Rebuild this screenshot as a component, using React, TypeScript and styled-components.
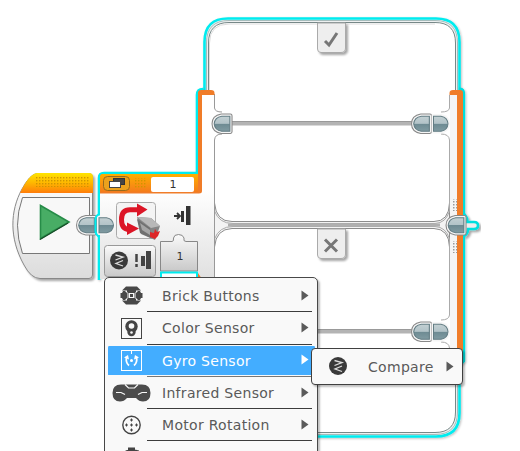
import React from "react";
import styled, { createGlobalStyle } from "styled-components";

const GlobalStyle = createGlobalStyle`
  body { margin: 0; background: #fff; overflow: hidden; }
`;

const Canvas = styled.main`
  position: relative;
  width: 520px;
  height: 451px;
  overflow: hidden;
  background: #fff;
  font-family: "DejaVu Sans", sans-serif;
`;

const BlockArt = styled.svg`
  position: absolute;
  inset: 0;
  display: block;
`;

const BlockValue = styled.span<{ $x: number; $y: number }>`
  position: absolute;
  left: ${(p) => p.$x}px;
  top: ${(p) => p.$y}px;
  width: 20px;
  text-align: center;
  font: 11px/14px "DejaVu Sans", sans-serif;
  color: #333;
`;

const Menu = styled.ul`
  position: absolute;
  left: 104px;
  top: 277px;
  box-sizing: border-box;
  width: 214px;
  height: 210px;
  margin: 0;
  padding: 2px 3px;
  list-style: none;
  background: #f9f9f9;
  border: 1px solid #484848;
  border-radius: 5px;
  box-shadow: 2px 2px 2px rgba(0, 0, 0, 0.25);
`;

const MenuRow = styled.li<{ $active?: boolean }>`
  display: grid;
  grid-template-columns: 39px 1fr;
  height: 32.3px;
  margin-right: ${(p) => (p.$active ? -1 : 0)}px;
  border-radius: 3px;
  color: ${(p) => (p.$active ? "#fff" : "#5a5a5a")};
  background: ${(p) => (p.$active ? "linear-gradient(#43adff, #43adff) 0 1px / 100% 29px no-repeat" : "none")};
`;

const IconCell = styled.span`
  display: flex;
  align-items: center;
  padding: 0 0 1px 4px;
`;

const LabelCell = styled.span<{ $active?: boolean }>`
  display: flex;
  align-items: center;
  justify-content: space-between;
  box-sizing: border-box;
  margin-right: ${(p) => (p.$active ? 3 : 2)}px;
  padding: 0 3px 1px 15px;
  border-bottom: 1px solid ${(p) => (p.$active ? "#777" : "#3c3c3c")};
`;

const Label = styled.span`
  padding-top: 2px;
  font-size: 14px;
  letter-spacing: 0.3px;
  line-height: 20px;
  white-space: nowrap;
`;

const Submenu = styled.div`
  position: absolute;
  left: 311px;
  top: 348px;
  box-sizing: border-box;
  display: flex;
  align-items: center;
  width: 152px;
  height: 37px;
  padding: 0 8px 1px 17px;
  color: #5a5a5a;
  background: #f9f9f9;
  border: 1px solid #404040;
  border-radius: 4px;
  box-shadow: 2px 2px 2px rgba(0, 0, 0, 0.25);
`;

const SubmenuLabel = styled(Label)`
  margin: 0 auto 0 20px;
`;

const Arrow = () => (
  <svg width="8" height="11" viewBox="0 0 8 11"><path d="M.5.5 7.5 5.5.5 10.5Z" fill="currentColor" /></svg>
);

const CompareGlyph = ({ x = 0, y = 0 }: { x?: number; y?: number }) => (
  <g transform={`translate(${x} ${y})`}>
    <circle cx="9" cy="9" r="9" fill="#3a3a3a" />
    <path d="M5.500 3.500 13 5.500 5.500 8.500M13 9 6 12 13 14.500" fill="none" stroke="#ddd" strokeWidth="1.300" />
  </g>
);

const icons: Record<string, React.ReactNode> = {
  brick: (
    <g fill="#484848">
      <path d="M14 5.500H25L29 9.500H10ZM10 19.500H29L25 23.500H14Z" />
      <path d="M8.500 12H10L11 10H13L15 12V17L13 19H11L10 17H8.500ZM30.500 12H29L28 10H26L24 12V17L26 19H28L29 17H30.500Z" />
      <path d="M15 8H24V11H15ZM15 18H24V21H15Z" />
      <rect x="16" y="11.500" width="7" height="6" fill="#f9f9f9" stroke="#484848" />
      <rect x="18" y="13" width="3" height="3" />
    </g>
  ),
  color: (
    <g>
      <rect x="9.5" y="5.5" width="20" height="20" fill="none" stroke="#444" />
      <circle cx="19.5" cy="13.5" r="6.200" fill="#444" /><circle cx="19.5" cy="19" r="4.200" fill="#444" />
      <circle cx="19.5" cy="13" r="2.8" fill="#f9f9f9" /><circle cx="19.5" cy="19.500" r="1.3" fill="#f9f9f9" />
    </g>
  ),
  gyro: (
    <g fill="none" stroke="#fff">
      <rect x="9.5" y="5.5" width="20" height="20" />
      <path d="M19.5 6V9" />
      <path d="M17 20.500Q13.500 18 14.500 12M22 20.500Q25.500 18 24.500 12" strokeWidth="1.800" />
      <path d="M12 12.500 16 10 17 14.500ZM27 12.500 23 10 22 14.500Z" fill="#fff" stroke="none" />
      <circle cx="19.5" cy="15.500" r="1.5" fill="#fff" stroke="none" />
    </g>
  ),
  infrared: (
    <g>
      <path d="M9 6.500H30Q38.500 6.500 38.500 15T31 23.500Q27 23.500 24 20H15Q12 23.500 8 23.500Q.5 23.500 .5 15T9 6.500Z" fill="#4c4c4c" />
      <path d="M13 6.500 16.500 10H22.500L26 6.500" fill="none" stroke="#f9f9f9" strokeWidth="1.200" />
      <path d="M4 14.500H9L13 16.500M26 16.500 30 14.500H35" fill="none" stroke="#f9f9f9" strokeWidth="1.2" />
    </g>
  ),
  motor: (
    <g fill="none" stroke="#444">
      <circle cx="19.5" cy="15" r="8.700" strokeWidth="1.4" />
      <path d="M19.5 8.500V11.500M19.5 18.500V21.500M18 10H21M18 20H21M13 15H16M14.500 13.500V16.500M23 15H26M24.500 13.500V16.500M18 15H21M19.500 13.500V16.500" />
    </g>
  ),
  timer: (
    <g fill="#444"><path d="M16 5.500H23V8H16ZM13.500 8.500 17 7.500H23L27 8.500V11H13.500Z" /><circle cx="19.500" cy="17" r="8" /></g>
  ),
};

const entries = [
  ["brick", "Brick Buttons"],
  ["color", "Color Sensor"],
  ["gyro", "Gyro Sensor"],
  ["infrared", "Infrared Sensor"],
  ["motor", "Motor Rotation"],
  ["timer", ""],
];

const Plug = ({ x, y, flip }: { x: number; y: number; flip?: boolean }) => (
  <g transform={flip ? `translate(${x + 19} ${y}) scale(-1 1.08)` : `translate(${x} ${y}) scale(1.08)`}>
    <path d="M9 .5H17.5Q19 .5 19 2V17Q19 18.5 17.5 18.5H9Q.5 17 .5 9.5Q.5 2 9 .5Z" fill="#f6f6f6" stroke={flip ? "none" : "#888"} />
    <path d="M9.5 2.5H17V16.5H9.5Q3 15.5 2.5 9.5Q3 3.5 9.5 2.5Z" fill="url(#plug)" stroke="#637d84" />
  </g>
);

const Blocks = () => (
  <BlockArt width="520" height="451" viewBox="0 0 520 451">
    <defs>
      <linearGradient id="amber" x2="0" y2="1"><stop stopColor="#ffe500" /><stop offset=".5" stopColor="#ffb600" /><stop offset="1" stopColor="#ff7d0a" /></linearGradient>
      <linearGradient id="orange" x2="0" y2="1"><stop stopColor="#ffb000" /><stop offset="1" stopColor="#f47b1c" /></linearGradient>
      <linearGradient id="plug" x2="0" y2="1"><stop stopColor="#c3d0d3" /><stop offset=".48" stopColor="#b2c3c8" /><stop offset=".5" stopColor="#6d8a92" /><stop offset="1" stopColor="#809ba2" /></linearGradient>
      <linearGradient id="body" x2="0" y2="1"><stop stopColor="#fff" /><stop offset="1" stopColor="#dcdcdc" /></linearGradient>
      <linearGradient id="switchBody" gradientUnits="userSpaceOnUse" x1="0" x2="0" y1="190" y2="285"><stop stopColor="#fff" /><stop offset="1" stopColor="#dedede" /></linearGradient>
      <linearGradient id="chip" x2="0" y2="1"><stop stopColor="#fafafa" /><stop offset="1" stopColor="#c9c9c9" /></linearGradient>
      <pattern id="dots" width="3" height="3" patternUnits="userSpaceOnUse"><rect width="1.4" height="1.4" fill="#d09400" /></pattern>
      <pattern id="greyDots" width="3" height="3" patternUnits="userSpaceOnUse"><rect width="1.5" height="1.5" fill="#999" /></pattern>
      <filter id="shadow" x="-10%" y="-10%" width="125%" height="125%"><feDropShadow dx="2" dy="2" stdDeviation="1.2" floodOpacity=".35" /></filter>
      <filter id="softShadow" filterUnits="userSpaceOnUse" x="0" y="0" width="520" height="451"><feDropShadow dx="1" dy="1" stdDeviation="1.2" floodOpacity=".25" /></filter>
    </defs>

    {/* start block */}
    <path d="M37 173.5H89Q92.5 173.5 92.5 177V275Q92.5 278.5 89 278.5H40Q31 278.5 24 265C9 238 10 211 22 189Q30 174 37 173.5Z" fill="url(#body)" stroke="#888" filter="url(#shadow)" />
    <path d="M20 193Q29 174 37 173H89Q93 173 93 177V193Z" fill="url(#amber)" />
    <rect x="36" y="177" width="53" height="10" fill="url(#dots)" />
    <path d="M22.5 197.5H89.5V253.5H22.5Q12.5 225 22.5 197.5Z" fill="#f8f8f8" stroke="#777" />
    <path d="M40.5 205.5 69 222 40.5 238.5Z" fill="#48ad65" stroke="#278c48" strokeWidth="1.6" />
    <path d="M40 239.5 68 223" stroke="#174d28" strokeWidth="1.2" />

    {/* switch frame */}
    <path d="M204.5 95V42Q204.5 18.5 228 18.5H436Q459.5 18.5 459.5 42V413Q459.5 436.5 436 436.5H225Q204.5 436.5 204.5 413Z" fill="#eef1f1" stroke="#00ecef" strokeWidth="2.600" filter="url(#softShadow)" />
    <path d="M206.500 215V43Q206.500 20.500 229 20.500H435Q457.500 20.500 457.500 43V412Q457.500 434.500 435 434.500H229" fill="none" stroke="#a5bcbc" />
    <path d="M208.5 215V43Q208.5 22.5 229 22.5H435Q455.5 22.5 455.5 43V412Q455.5 432.5 435 432.5H229Q208.5 432.5 208.5 412Z" fill="#fff" stroke="#778888" />
    <path d="M209.5 95V43Q209.5 24 229 24H435" fill="none" stroke="#ddd" />

    {/* seam between the two cases */}
    <path d="M214.5 203Q216 221.500 232 221.5H434Q449 221.500 449.5 203V247Q449 229 434 228.5H232Q216 229 214.5 247Z" fill="#f3f3f3" stroke="#8c8c8c" />
    <path d="M214.500 211Q219 223.500 233 223.500H435Q446 223 449.500 211M214.500 239Q219 226.500 233 226.500H435Q446 227 449.500 239" fill="none" stroke="#aaa" />
    <path d="M228 225H440" stroke="#b0b0b0" strokeWidth="3" />

    {/* sequence wires */}
    <path d="M230 123.5H414M230 331.5H414" stroke="#b4b4b4" strokeWidth="4" />
    <path d="M230 121.5H414M230 329.5H414" stroke="#999" />

    {/* case tabs */}
    <g fill="#eee" stroke="#aaa" filter="url(#shadow)">
      <path d="M317.5 23V49Q317.5 52.5 321 52.5H341Q345.5 52.5 345.5 48V23Z" />
      <path d="M317.5 229V255Q317.5 258.5 321 258.5H341Q345.5 258.5 345.5 254V229Z" />
    </g>
    <path d="M325 41 329 45 337 33" fill="none" stroke="#777" strokeWidth="3" />
    <path d="M325 239.5 337 251.5M337 239.5 325 251.5" stroke="#777" strokeWidth="3" />

    {/* right column */}
    <path d="M459 89H460Q463.700 89 463.700 94V361L460 365" fill="none" stroke="#00dede" strokeWidth="3" filter="url(#softShadow)" />
    <path d="M450 92V360H458V92Z" fill="#f4f4f4" />
    <path d="M449.5 95V108Q449 112 441 112M441 134Q449 134 449.5 140V211M449.5 239V315Q449 320 441 320M441 342Q449 342 449.5 348V360" fill="none" stroke="#aaa" />
    <path d="M449.5 95V93Q449.5 90 453 90H460Q463 90 463 93V360H457V95Z" fill="#f07c28" />
    <rect x="452" y="199" width="5" height="12" fill="url(#greyDots)" /><rect x="452" y="241" width="5" height="12" fill="url(#greyDots)" />

    {/* main switch body */}
    <path d="M99 280V178Q99 173 104 173H197V95Q197 89 203 89" fill="none" stroke="#00ecef" strokeWidth="2.600" filter="url(#softShadow)" />
    <path d="M100 192H200V93H214.5V108Q215 113 222 113V133Q215 133 214.5 139V279H100Z" fill="url(#switchBody)" />
    <path d="M214.5 94V108Q215 112 222 112M222 134Q215 134 214.5 140V278" fill="none" stroke="#999" />
    <path d="M100 193.5V177Q100 174 103 174H198V93Q198 90 201 90H211Q214.5 90 214.5 93V95H202V191Q202 193.5 199 193.5Z" fill="#f07c28" />
    <path d="M100 192V177Q100 174 103 174H198V192Z" fill="url(#orange)" />
    <rect x="103.500" y="176.500" width="26" height="14" rx="4" fill="#eba11d" stroke="#966a1d" />
    <rect x="113.500" y="178.500" width="11" height="6" fill="#444" stroke="#333" />
    <rect x="109.500" y="181.500" width="11" height="6" fill="#fff" stroke="#444" />
    <rect x="134" y="178" width="13" height="10" fill="url(#dots)" />
    <rect x="151" y="177" width="43" height="15" rx="2" fill="#fff" />

    <rect x="116.500" y="202.500" width="39" height="36" rx="3" fill="#f4f4f4" stroke="#aaa" />
    <path d="M139 209.800H130Q121.500 209.800 121.500 219.500T129 229.500" fill="none" stroke="#dc1526" strokeWidth="5" />
    <path d="M137 203.500 147.500 209.500 137 216.500ZM127 222.500 139 228.500 127 235Z" fill="#dc1526" />
    <path d="M137 217 151 218 160 226 155 240 141 234Z" fill="#858585" /><path d="M137 217 151 218 160 226 151 228Z" fill="#b8b8b8" /><path d="M137 219 150 228 151 238 140 233Z" fill="#707070" /><path d="M140 223 150 230V235L142 230Z" fill="#a5a5a5" />
    <path d="M150 232 154 233 155 229 157 232 160 231 158 236 155 239 150 237Z" fill="#dd2528" />
    <path d="M174 216H179M177 213 180 216 177 219" fill="none" stroke="#333" strokeWidth="1.8" />
    <rect x="181" y="211" width="3" height="11" fill="#333" /><rect x="186" y="206" width="4.500" height="19" fill="#333" />
    <rect x="104.500" y="245.500" width="51" height="31" rx="3" fill="url(#chip)" stroke="#999" />
    <CompareGlyph x={110} y={251.500} />
    <path d="M136.500 254V262M136.500 264V267" stroke="#444" strokeWidth="2.500" />
    <rect x="141" y="256" width="4" height="10" fill="#444" /><rect x="146" y="251" width="5" height="18" fill="#444" />
    <path d="M160.500 271V241.500H172Q174 241.500 173.500 238Q174 234.500 178.500 234.500T184 238Q183 241.500 186 241.500H197.500V271Z" fill="url(#chip)" stroke="#888" />
    <path d="M161 278V272.500H197V278" fill="#fff" stroke="#00ecef" strokeWidth="2" />
    <path d="M198 273 202 279H198Z" fill="#f07c28" />

    <Plug x={76} y={215} />
    <Plug x={97} y={215} flip />
    <path d="M99 214Q95.500 216 95.500 219V231Q95.500 234 99 237" fill="none" stroke="#00ecef" strokeWidth="2" />
    <Plug x={211.500} y={113.500} />
    <Plug x={411} y={113.500} /><Plug x={431.500} y={113.500} flip />
    <Plug x={411} y={321.500} /><Plug x={431.500} y={321.500} flip />
    <path d="M464 214Q468 218 467 222H474Q478 222 478 225.500T474 229H468Q468 234 464 236" fill="#eee" stroke="#00dede" strokeWidth="2.600" filter="url(#shadow)" />
    <path d="M462 225.500H475" stroke="#eee" strokeWidth="3" />
    <Plug x={445.500} y={215} />
  </BlockArt>
);

export default function App() {
  return (
    <Canvas>
      <GlobalStyle />
      <Blocks />
      <BlockValue $x={163} $y={178}>1</BlockValue>
      <BlockValue $x={170} $y={250}>1</BlockValue>
      <Menu>
        {entries.map(([id, label]) => {
          const active = id === "gyro";
          return (
            <MenuRow key={id} $active={active}>
              <IconCell><svg width="40" height="30" viewBox="0 0 40 30" overflow="visible">{icons[id]}</svg></IconCell>
              <LabelCell $active={active}><Label>{label}</Label><Arrow /></LabelCell>
            </MenuRow>
          );
        })}
      </Menu>
      <Submenu>
        <svg width="19" height="19" viewBox="0 0 19 19"><CompareGlyph /></svg>
        <SubmenuLabel>Compare</SubmenuLabel>
        <Arrow />
      </Submenu>
    </Canvas>
  );
}
